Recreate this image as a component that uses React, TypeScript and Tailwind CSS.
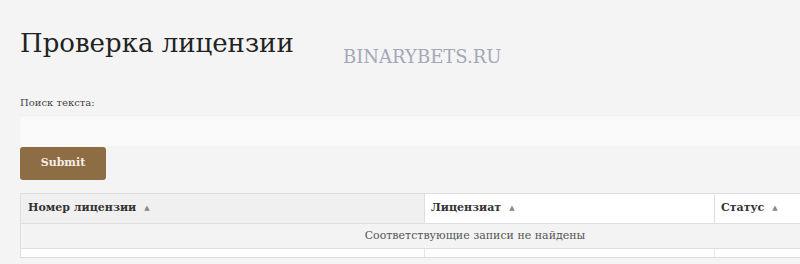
import { useState } from 'react';

const serif = { fontFamily: '"DejaVu Serif", "Liberation Serif", serif' };

function SortArrow() {
  return <span className="ml-2 inline-block align-middle text-[7px] text-[#888]">▲</span>;
}

export default function App() {
  const [query, setQuery] = useState('');

  return (
    <div className="relative h-[264px] w-[800px] overflow-hidden bg-[#f4f4f4] pl-5" style={serif}>
      <h1 className="pt-[28px] text-[26px] leading-[30px] text-[#222]">Проверка лицензии</h1>
      <span className="absolute left-[343px] top-[46px] text-[18px] leading-[22px] text-[#a3a7ba]">BINARYBETS.RU</span>

      <label className="mt-[38px] block text-[10px] leading-[14px] text-[#444]">Поиск текста:</label>
      <input
        value={query}
        onChange={(e) => setQuery(e.target.value)}
        className="mt-[5px] block h-[31px] w-[790px] bg-[#fafafa] px-2 text-[12px] shadow-[inset_0_1px_2px_rgba(0,0,0,0.05)] outline-none"
      />
      <button className="mt-px block h-[33px] w-[86px] rounded-[3px] bg-[#8d6d44] text-[11px] font-bold text-[#f4efe6]">
        Submit
      </button>

      <div className="mt-[13px] w-[910px] border border-[#dedede] bg-white text-[11px] text-[#333]">
        <div className="flex h-[30px] border-b border-[#dedede]">
          <div className="flex w-[404px] items-center border-r border-[#dedede] bg-[#f0f0f0] pl-[7px] font-bold">
            Номер лицензии <SortArrow />
          </div>
          <div className="flex w-[290px] items-center border-r border-[#dedede] pl-[6px] font-bold">
            Лицензиат <SortArrow />
          </div>
          <div className="flex flex-1 items-center pl-[6px] font-bold">
            Статус <SortArrow />
          </div>
        </div>
        <div className="flex h-[25px] items-center justify-center border-b border-[#dedede] bg-[#f3f3f3] text-[11px] text-[#555]">
          Соответствующие записи не найдены
        </div>
        <div className="flex h-[8px]">
          <div className="w-[404px] border-r border-[#e6e6e6]" />
          <div className="w-[290px] border-r border-[#e6e6e6]" />
          <div className="flex-1" />
        </div>
      </div>
    </div>
  );
}
